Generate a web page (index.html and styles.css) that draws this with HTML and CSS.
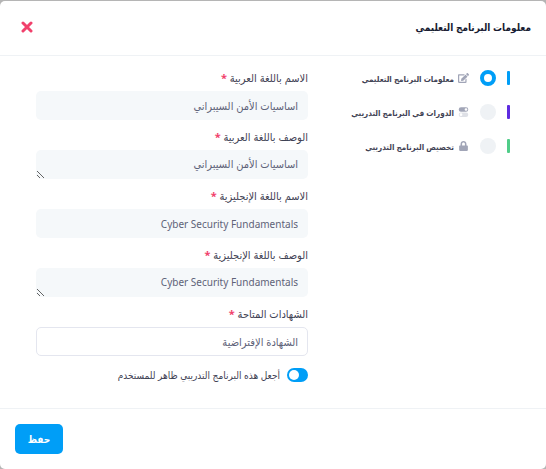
FILE: index.html
```html
<!DOCTYPE html>
<html lang="ar" dir="rtl">
<head>
    <meta charset="UTF-8">
    <meta name="viewport" content="width=device-width, initial-scale=1.0">
    <title>معلومات البرنامج التعليمي</title>
    <link rel="stylesheet" href="styles.css">
</head>
<body>
    <div class="modal-content">
        <header class="modal-header">
            <h2>معلومات البرنامج التعليمي</h2>
            <button type="button" class="close-btn" aria-label="إغلاق">
                <svg viewBox="0 0 12 12" width="12" height="12"><path d="M2 2l8 8M10 2l-8 8"/></svg>
            </button>
        </header>

        <form class="program-form" id="programForm">
            <!-- Steps -->
            <div class="steps">
                <label class="step step-info">
                    <input type="radio" name="step" checked>
                    <svg class="step-icon" viewBox="0 0 576 512"><path d="M402.600 83.200l90.200 90.200c3.800 3.800 3.800 10 0 13.800L274.400 405.600l-92.800 10.300c-12.400 1.400-22.900-9.100-21.500-21.500l10.300-92.800L388.800 83.200c3.800-3.800 10-3.800 13.800 0zm162-22.900l-48.800-48.800c-15.200-15.200-39.900-15.200-55.200 0l-35.400 35.400c-3.800 3.800-3.800 10 0 13.800l90.200 90.200c3.800 3.800 10 3.800 13.800 0l35.400-35.400c15.200-15.300 15.200-40 0-55.200zM384 346.200V448H64V128h229.800c3.200 0 6.200-1.300 8.500-3.500l40-40c7.600-7.600 2.200-20.500-8.500-20.500H48C21.500 64 0 85.500 0 112v352c0 26.500 21.500 48 48 48h352c26.500 0 48-21.500 48-48V306.200c0-10.700-12.900-16-20.500-8.500l-40 40c-2.200 2.300-3.500 5.300-3.500 8.500z"/></svg>
                    <span>معلومات البرنامج التعليمي</span>
                </label>
                <label class="step step-courses">
                    <input type="radio" name="step">
                    <svg class="step-icon" viewBox="1 1.500 22 22"><path fill-rule="evenodd" d="M6.500 2h11a5 5 0 0 1 0 10h-11a5 5 0 0 1 0-10zm11 2a3 3 0 1 0 0 6 3 3 0 0 0 0-6z"/><path opacity=".35" fill-rule="evenodd" d="M6.500 13.500h11a5 5 0 0 1 0 10h-11a5 5 0 0 1 0-10zm0 2a3 3 0 1 0 0 6 3 3 0 0 0 0-6z"/></svg>
                    <span>الدورات في البرنامج التدريبي</span>
                </label>
                <label class="step step-assign">
                    <input type="radio" name="step">
                    <svg class="step-icon" viewBox="0 0 448 512"><path d="M400 224h-24v-72C376 68.200 307.800 0 224 0S72 68.200 72 152v72H48c-26.500 0-48 21.500-48 48v192c0 26.500 21.500 48 48 48h352c26.500 0 48-21.500 48-48V272c0-26.500-21.500-48-48-48zm-104 0H152v-72c0-39.700 32.300-72 72-72s72 32.300 72 72v72z"/></svg>
                    <span>تخصيص البرنامج التدريبي</span>
                </label>
            </div>

            <!-- Program fields -->
            <div class="fields">
                <div class="field">
                    <label for="nameAr">الاسم باللغة العربية <span class="required">*</span></label>
                    <input type="text" id="nameAr" value="اساسيات الأمن السيبراني">
                </div>
                <div class="field">
                    <label for="descAr">الوصف باللغة العربية <span class="required">*</span></label>
                    <textarea id="descAr" rows="1">اساسيات الأمن السيبراني</textarea>
                </div>
                <div class="field field-en">
                    <label for="nameEn">الاسم باللغة الإنجليزية <span class="required">*</span></label>
                    <input type="text" id="nameEn" value="Cyber Security Fundamentals">
                </div>
                <div class="field field-en">
                    <label for="descEn">الوصف باللغة الإنجليزية <span class="required">*</span></label>
                    <textarea id="descEn" rows="1">Cyber Security Fundamentals</textarea>
                </div>
                <div class="field">
                    <label for="certificate">الشهادات المتاحة <span class="required">*</span></label>
                    <select id="certificate">
                        <option>الشهادة الإفتراضية</option>
                    </select>
                </div>
                <label class="switch">
                    <input type="checkbox" checked>
                    <span>أجعل هذه البرنامج التدريبي ظاهر للمستخدم</span>
                </label>
            </div>
        </form>

        <footer class="modal-footer">
            <button type="submit" form="programForm" class="save-btn">حفظ</button>
        </footer>
    </div>
</body>
</html>
```

FILE: styles.css
```css
* {
    box-sizing: border-box;
}
body {
    margin: 0;
    padding-top: 1px;
    background-color: #b5b5b5;
    color: #3f4254;
    font-family: "Noto Sans", "DejaVu Sans Condensed", "DejaVu Sans", sans-serif;
    font-size: 11px;
}
input, textarea, select, button {
    font-family: inherit;
}
.modal-content {
    display: flex;
    flex-direction: column;
    min-height: calc(100vh - 1px);
    background-color: white;
    border-radius: 5px;
}
.modal-header {
    display: flex;
    justify-content: space-between;
    align-items: center;
    height: 55px;
    padding: 0 15px 2px;
    border-bottom: 1px solid #eff2f5;
}
.modal-header h2 {
    margin: 0;
    color: #181c32;
    font-size: 10px;
    font-weight: 600;
}
.close-btn {
    display: flex;
    padding: 6px;
    border: none;
    background: none;
    cursor: pointer;
}
.close-btn svg {
    fill: none;
    stroke: #f1416c;
    stroke-width: 3;
    stroke-linecap: round;
}
.program-form {
    flex: 1;
    display: grid;
    grid-template-columns: minmax(0, 5fr) minmax(0, 8fr);
    gap: 32px;
    padding: 14px 36px 24px;
}
/* Steps */
.steps {
    display: flex;
    flex-direction: column;
    gap: 18px;
}
.step {
    display: flex;
    align-items: center;
    height: 16px;
    color: #3f4254;
    font-size: 8px;
    font-weight: 600;
    white-space: nowrap;
    cursor: pointer;
}
.step::before {
    content: "";
    width: 3px;
    height: 14px;
    border-radius: 1px;
}
.step-info::before {
    background-color: #009ef7;
}
.step-courses::before {
    background-color: #5e2be0;
}
.step-assign::before {
    background-color: #50cd89;
}
.step input {
    appearance: none;
    flex: none;
    width: 16px;
    height: 16px;
    margin: 0 11px;
    border-radius: 50%;
    background-color: #eff2f5;
}
.step input:checked {
    border: 4px solid #009ef7;
    background-color: white;
}
.step-icon {
    flex: none;
    width: 11px;
    height: 10px;
    margin-left: 4px;
    fill: #a1a5b7;
}
/* Fields */
.field {
    display: flex;
    flex-direction: column;
    gap: 5px;
    margin-bottom: 9px;
}
.field label {
    line-height: 16px;
}
.required {
    color: #f1416c;
    font-weight: 700;
}
.field input,
.field textarea,
.field select {
    appearance: none;
    width: 100%;
    height: 29px;
    margin: 0;
    padding: 0 10px;
    border: none;
    border-radius: 5px;
    background-color: #f5f8fa;
    color: #5e6278;
    font-size: 11px;
    line-height: 28px;
}
.field-en input,
.field-en textarea {
    font-size: 10px;
}
.field textarea {
    overflow: hidden;
    resize: vertical;
}
.field select {
    padding: 0 9px;
    border: 1px solid #e4e6ef;
    background-color: white;
}
.switch {
    display: flex;
    align-items: center;
    gap: 7px;
    margin-top: 11px;
    font-size: 10px;
    line-height: 16px;
    white-space: nowrap;
    cursor: pointer;
}
.switch input {
    appearance: none;
    display: flex;
    align-items: center;
    justify-content: flex-end;
    flex: none;
    width: 21px;
    height: 14px;
    margin: 0;
    padding: 2px;
    border-radius: 7px;
    background-color: #009ef7;
}
.switch input::before {
    content: "";
    width: 10px;
    height: 10px;
    border-radius: 50%;
    background-color: white;
}
.modal-footer {
    display: flex;
    justify-content: flex-end;
    padding: 15px;
    border-top: 1px solid #eff2f5;
}
.save-btn {
    min-width: 48px;
    height: 30px;
    padding: 0 12px;
    border: none;
    border-radius: 5px;
    background-color: #009ef7;
    color: white;
    font-size: 10px;
    font-weight: 600;
    cursor: pointer;
}
```
